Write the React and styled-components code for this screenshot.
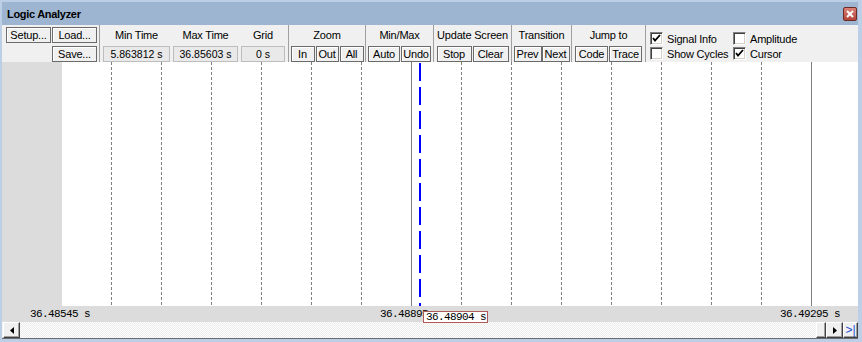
import React from "react";
import styled, { createGlobalStyle } from "styled-components";

const GlobalStyle = createGlobalStyle`
  html, body { margin: 0; padding: 0; background: #ffffff; }
  body { font-family: "Liberation Sans", Arial, sans-serif; }
`;

const Window = styled.div`
  box-sizing: border-box;
  width: 862px;
  height: 342px;
  display: flex;
  flex-direction: column;
  border-style: solid;
  border-color: #bccfe6;
  border-width: 2px 4px 3px 2px;
  background: #f0f0f0;
  overflow: hidden;
`;

const TitleBar = styled.div`
  height: 23px;
  flex: none;
  display: flex;
  align-items: center;
  justify-content: space-between;
  padding: 0 1px 0 5px;
  background: #9db5d1;
  font-weight: bold;
  font-size: 11px;
  letter-spacing: -0.3px;
  color: #000;
`;

const CloseButton = styled.div`
  box-sizing: border-box;
  width: 14px;
  height: 14px;
  display: flex;
  align-items: center;
  justify-content: center;
  border: 1px solid #6e2a24;
  border-radius: 2px;
  background: linear-gradient(#dc8177, #b3453b);
`;

const Toolbar = styled.div`
  height: 37px;
  flex: none;
  display: flex;
  background: #f0f0f0;
`;

const Group = styled.div`
  box-sizing: border-box;
  width: ${(p) => (p.$w ? `${p.$w + 1}px` : "auto")};
  flex: ${(p) => (p.$w ? "none" : "1")};
  display: flex;
  flex-direction: column;
  align-items: center;
  border-right: ${(p) => (p.$w ? "1px solid #a0a0a0" : "none")};
`;

const GroupLabel = styled.div`
  height: 21px;
  line-height: 21px;
  font-size: 11px;
  letter-spacing: -0.2px;
  white-space: nowrap;
`;

const ButtonRow = styled.div`
  display: flex;
  gap: ${(p) => p.$gap ?? 1}px;
`;

const Button = styled.div`
  box-sizing: border-box;
  width: ${(p) => p.$w}px;
  height: 16px;
  display: flex;
  align-items: center;
  justify-content: center;
  border: 1px solid #6b6b6b;
  box-shadow: inset 1px 1px #ffffff;
  background: #f0f0f0;
  font-size: 11px;
  letter-spacing: -0.2px;
  white-space: nowrap;
`;

const FileGrid = styled.div`
  display: grid;
  grid-template-columns: 45px 45px;
  grid-template-rows: 16px 16px;
  column-gap: 1px;
  row-gap: 3px;
  padding: 2px 0 0 4px;
  align-self: flex-start;
`;

const FieldRow = styled.div`
  display: flex;
  gap: 3px;
  padding-left: 3px;
  align-self: flex-start;
`;

const Field = styled.div`
  width: ${(p) => p.$w}px;
  display: flex;
  flex-direction: column;
  align-items: center;
`;

const ValueBox = styled.div`
  box-sizing: border-box;
  width: 100%;
  height: 16px;
  line-height: 14px;
  text-align: center;
  border: 1px solid #bdbdbd;
  background: #e9e9e9;
  font-size: 10.5px;
  white-space: nowrap;
`;

const CheckGrid = styled.div`
  display: grid;
  grid-template-columns: 83px auto;
  grid-auto-rows: 13px;
  row-gap: 2px;
  padding: 7px 0 0 4px;
  align-self: flex-start;
`;

const CheckItem = styled.div`
  display: flex;
  align-items: center;
  gap: 4px;
  font-size: 11px;
  letter-spacing: -0.2px;
  white-space: nowrap;
`;

const Box = styled.div`
  box-sizing: border-box;
  width: 13px;
  height: 13px;
  display: flex;
  align-items: center;
  justify-content: center;
  background: #ffffff;
  border-style: solid;
  border-width: 1px;
  border-color: #808080 #ffffff #ffffff #808080;
  box-shadow: inset 1px 1px #404040, inset -1px -1px #d4d0c8;
`;

const PlotRow = styled.div`
  height: 244px;
  flex: none;
  display: flex;
`;

const Gutter = styled.div`
  width: 60px;
  background: #dcdcdc;
`;

const Plot = styled.div`
  flex: 1;
  background: #ffffff;
  display: flex;
`;

const TimeStrip = styled.div`
  position: relative;
  height: 16px;
  flex: none;
  background: #dcdcdc;
  font-family: "Liberation Mono", "DejaVu Sans Mono", monospace;
  font-size: 11px;
  letter-spacing: -0.6px;
  z-index: 1;
`;

const AxisLabel = styled.span`
  position: absolute;
  left: ${(p) => p.$x}px;
  top: 0;
  line-height: 16px;
  white-space: pre;
`;

const CursorLabel = styled.span`
  position: absolute;
  left: ${(p) => p.$x}px;
  top: 5px;
  box-sizing: border-box;
  width: 65px;
  height: 12px;
  padding-left: 2px;
  line-height: 11px;
  background: #ffffff;
  border: 1px solid #b05a5a;
  white-space: pre;
`;

const ScrollBar = styled.div`
  height: 16px;
  flex: none;
  display: flex;
  border-bottom: 1px solid #6d6d6d;
  background: repeating-conic-gradient(#ececec 0 25%, #ffffff 0 50%) 0 0 / 2px 2px;
`;

const ScrollButton = styled.div`
  box-sizing: border-box;
  width: ${(p) => p.$w}px;
  margin-left: ${(p) => p.$ml ?? 0}px;
  height: 16px;
  display: flex;
  align-items: center;
  justify-content: center;
  background: #f0f0f0;
  border-style: solid;
  border-width: 1px;
  border-color: #ffffff #404040 #404040 #ffffff;
  box-shadow: inset -1px -1px #a0a0a0;
  font-size: 12px;
  color: #1f4fd0;
`;

const Track = styled.div`
  flex: 1;
`;

const Check = () => (
  <svg width="9" height="9" viewBox="0 0 9 9">
    <path d="M1 4 L3 6.5 L8 1" fill="none" stroke="#000" strokeWidth="1.8" />
  </svg>
);

const Triangle = ({ dir }) => (
  <svg width="4" height="7" viewBox="0 0 4 7">
    {dir === "left" ? <path d="M4 0 L0 3.5 L4 7 Z" fill="#000" /> : <path d="M0 0 L4 3.5 L0 7 Z" fill="#000" />}
  </svg>
);

const Grid = () => {
  const lines = Array.from({ length: 15 }, (_, k) => 49.5 + 50 * k);
  return (
    <svg width="796" height="244" viewBox="0 0 796 244">
      {lines.map((x, k) => (
        <line
          key={k}
          x1={x}
          x2={x}
          y1="0"
          y2="244"
          stroke="#808080"
          strokeWidth="1"
          strokeDasharray={k === 6 || k === 14 ? undefined : "3 2"}
        />
      ))}
      <line x1="358" x2="358" y1="1" y2="244" stroke="#0000ff" strokeWidth="2" strokeDasharray="18 6" />
    </svg>
  );
};

const checks = [
  { label: "Signal Info", on: true },
  { label: "Amplitude", on: false },
  { label: "Show Cycles", on: false },
  { label: "Cursor", on: true },
];

const App = () => {
  return (
    <>
      <GlobalStyle />
      <Window>
        <TitleBar>
          <span>Logic Analyzer</span>
          <CloseButton>
            <svg width="8" height="8" viewBox="0 0 8 8">
              <path d="M1 1 L7 7 M7 1 L1 7" stroke="#fff" strokeWidth="2" />
            </svg>
          </CloseButton>
        </TitleBar>
        <Toolbar>
          <Group $w={97}>
            <FileGrid>
              <Button $w={45}>Setup...</Button>
              <Button $w={45}>Load...</Button>
              <span />
              <Button $w={45}>Save...</Button>
            </FileGrid>
          </Group>
          <Group $w={188}>
            <FieldRow>
              <Field $w={67}>
                <GroupLabel>Min Time</GroupLabel>
                <ValueBox>5.863812 s</ValueBox>
              </Field>
              <Field $w={65}>
                <GroupLabel>Max Time</GroupLabel>
                <ValueBox>36.85603 s</ValueBox>
              </Field>
              <Field $w={44}>
                <GroupLabel>Grid</GroupLabel>
                <ValueBox>0 s</ValueBox>
              </Field>
            </FieldRow>
          </Group>
          <Group $w={76}>
            <GroupLabel>Zoom</GroupLabel>
            <ButtonRow>
              <Button $w={24}>In</Button>
              <Button $w={23}>Out</Button>
              <Button $w={24}>All</Button>
            </ButtonRow>
          </Group>
          <Group $w={67}>
            <GroupLabel>Min/Max</GroupLabel>
            <ButtonRow>
              <Button $w={32}>Auto</Button>
              <Button $w={30}>Undo</Button>
            </ButtonRow>
          </Group>
          <Group $w={77}>
            <GroupLabel>Update Screen</GroupLabel>
            <ButtonRow>
              <Button $w={35}>Stop</Button>
              <Button $w={36}>Clear</Button>
            </ButtonRow>
          </Group>
          <Group $w={59}>
            <GroupLabel>Transition</GroupLabel>
            <ButtonRow $gap={0}>
              <Button $w={28}>Prev</Button>
              <Button $w={28}>Next</Button>
            </ButtonRow>
          </Group>
          <Group $w={73}>
            <GroupLabel>Jump to</GroupLabel>
            <ButtonRow>
              <Button $w={33}>Code</Button>
              <Button $w={33}>Trace</Button>
            </ButtonRow>
          </Group>
          <Group>
            <CheckGrid>
              {checks.map((c) => (
                <CheckItem key={c.label}>
                  <Box>{c.on && <Check />}</Box>
                  {c.label}
                </CheckItem>
              ))}
            </CheckGrid>
          </Group>
        </Toolbar>
        <PlotRow>
          <Gutter />
          <Plot>
            <Grid />
          </Plot>
        </PlotRow>
        <TimeStrip>
          <AxisLabel $x={28}>36.48545 s</AxisLabel>
          <AxisLabel $x={378}>36.48895</AxisLabel>
          <CursorLabel $x={421}>36.48904 s</CursorLabel>
          <AxisLabel $x={778}>36.49295 s</AxisLabel>
        </TimeStrip>
        <ScrollBar>
          <ScrollButton $w={17} $ml={1}>
            <Triangle dir="left" />
          </ScrollButton>
          <Track />
          <ScrollButton $w={10} />
          <ScrollButton $w={17}>
            <Triangle dir="right" />
          </ScrollButton>
          <ScrollButton $w={15}>&gt;|</ScrollButton>
        </ScrollBar>
      </Window>
    </>
  );
};

export default App;
